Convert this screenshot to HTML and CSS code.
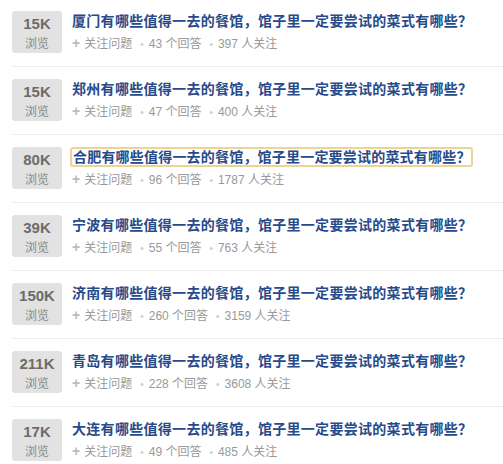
FILE: index.html
```html
<!DOCTYPE html>
<html lang="zh-CN">
<head>
<meta charset="utf-8">
<link rel="stylesheet" href="styles.css">
</head>
<body>
<div class="list">
  <div class="item">
    <div class="badge"><span class="num">15K</span><span class="lbl">浏览</span></div>
    <div class="body">
      <div class="title"><a>厦门有哪些值得一去的餐馆，馆子里一定要尝试的菜式有哪些？</a></div>
      <div class="meta"><span class="plus">+</span>关注问题<span class="dot">•</span>43 个回答<span class="dot">•</span>397 人关注</div>
    </div>
  </div>
  <div class="item">
    <div class="badge"><span class="num">15K</span><span class="lbl">浏览</span></div>
    <div class="body">
      <div class="title"><a>郑州有哪些值得一去的餐馆，馆子里一定要尝试的菜式有哪些？</a></div>
      <div class="meta"><span class="plus">+</span>关注问题<span class="dot">•</span>47 个回答<span class="dot">•</span>400 人关注</div>
    </div>
  </div>
  <div class="item">
    <div class="badge"><span class="num">80K</span><span class="lbl">浏览</span></div>
    <div class="body">
      <div class="title"><a class="focused">合肥有哪些值得一去的餐馆，馆子里一定要尝试的菜式有哪些？</a></div>
      <div class="meta"><span class="plus">+</span>关注问题<span class="dot">•</span>96 个回答<span class="dot">•</span>1787 人关注</div>
    </div>
  </div>
  <div class="item">
    <div class="badge"><span class="num">39K</span><span class="lbl">浏览</span></div>
    <div class="body">
      <div class="title"><a>宁波有哪些值得一去的餐馆，馆子里一定要尝试的菜式有哪些？</a></div>
      <div class="meta"><span class="plus">+</span>关注问题<span class="dot">•</span>55 个回答<span class="dot">•</span>763 人关注</div>
    </div>
  </div>
  <div class="item">
    <div class="badge"><span class="num">150K</span><span class="lbl">浏览</span></div>
    <div class="body">
      <div class="title"><a>济南有哪些值得一去的餐馆，馆子里一定要尝试的菜式有哪些？</a></div>
      <div class="meta"><span class="plus">+</span>关注问题<span class="dot">•</span>260 个回答<span class="dot">•</span>3159 人关注</div>
    </div>
  </div>
  <div class="item">
    <div class="badge"><span class="num">211K</span><span class="lbl">浏览</span></div>
    <div class="body">
      <div class="title"><a>青岛有哪些值得一去的餐馆，馆子里一定要尝试的菜式有哪些？</a></div>
      <div class="meta"><span class="plus">+</span>关注问题<span class="dot">•</span>228 个回答<span class="dot">•</span>3608 人关注</div>
    </div>
  </div>
  <div class="item">
    <div class="badge"><span class="num">17K</span><span class="lbl">浏览</span></div>
    <div class="body">
      <div class="title"><a>大连有哪些值得一去的餐馆，馆子里一定要尝试的菜式有哪些？</a></div>
      <div class="meta"><span class="plus">+</span>关注问题<span class="dot">•</span>49 个回答<span class="dot">•</span>485 人关注</div>
    </div>
  </div>
</div>
</body>
</html>
```
FILE: styles.css
```css
html, body {
  margin: 0;
  padding: 0;
  background: #fff;
}
body {
  font-family: "Liberation Sans", "Noto Sans CJK SC", sans-serif;
  overflow: hidden;
}
.list {
  margin: -1px 0 0 12px;
}
.item {
  display: flex;
  align-items: flex-start;
  gap: 10px;
  padding: 12px 0 13px;
  border-bottom: 1px dotted #dcdcdc;
}
.badge {
  flex: none;
  width: 50px;
  height: 42px;
  background: #e2e2e2;
  border-radius: 3px;
  display: flex;
  flex-direction: column;
  align-items: center;
  justify-content: flex-start;
}
.num {
  font-size: 15px;
  font-weight: bold;
  color: #6b6b6b;
  line-height: 18px;
  margin-top: 4px;
}
.lbl {
  font-size: 12px;
  color: #888;
  line-height: 16px;
  margin-top: 3px;
}
.body {
  min-width: 0;
  height: 42px;
}
.title {
  font-size: 14px;
  font-weight: bold;
  line-height: 20px;
  height: 20px;
  white-space: nowrap;
  letter-spacing: 0.3px;
}
.title a {
  color: #274a8a;
  text-decoration: none;
}
.title a.focused {
  border: 2px solid #ecd396;
  border-radius: 3px;
  margin-left: -2px;
  padding: 0 0 0 1px;
  letter-spacing: 0.2px;
}
.meta {
  margin-top: 3px;
  font-size: 12px;
  line-height: 18px;
  height: 18px;
  color: #999;
  white-space: nowrap;
}
.plus {
  color: #bbb;
  font-weight: bold;
  font-size: 14px;
  line-height: 18px;
  margin-right: 4px;
}
.dot {
  color: #ccc;
  font-size: 10px;
  line-height: 18px;
  margin: 0 5px 0 8px;
}
```
